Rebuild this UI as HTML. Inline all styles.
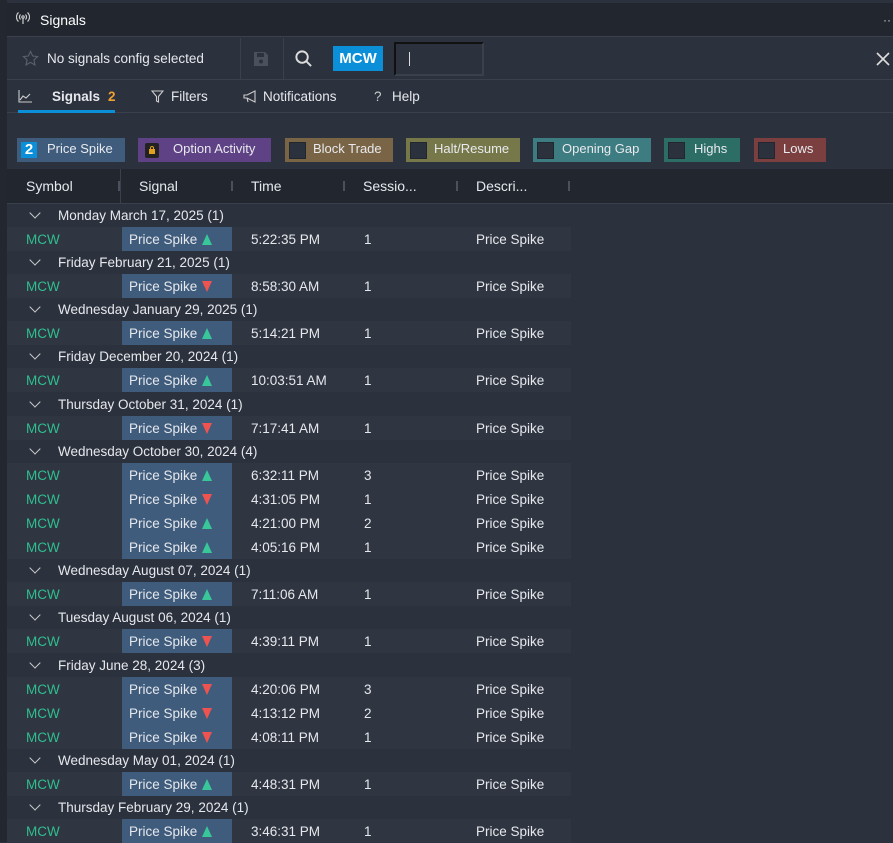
<!DOCTYPE html>
<html><head><meta charset="utf-8"><style>
*{box-sizing:border-box;margin:0;padding:0}
body{width:893px;height:842px;overflow:hidden;background:#2b313d;font-family:"Liberation Sans",sans-serif;font-size:13.5px;color:#e6e8ec;position:relative}
.strip{position:absolute;left:0;top:0;width:7px;height:842px;background:#23272f}
.top{position:absolute;left:7px;top:0;right:0;height:3px;background:#2b313d}
.title{position:absolute;left:7px;top:3px;right:0;height:34px;background:#21262f;border-bottom:1px solid #3a404c}
.title span{position:absolute;left:33px;top:9px;font-size:14px;color:#fff}
.tool{position:absolute;left:7px;top:38px;right:0;height:42px;background:#2b313d;border-bottom:1px solid #3a404c}
.tabs{position:absolute;left:7px;top:81px;right:0;height:32px;border-bottom:1px solid #3a404c}
.chip{position:absolute;top:138px;height:24px;color:#e8eaee;font-size:13px;line-height:22px}
.box{position:absolute;left:4px;top:4px;width:17px;height:17px;background:#2b313d;border:1px solid #22262e}
.hdr{position:absolute;left:7px;top:169px;right:0;height:35px;background:#21262f;border-bottom:1px solid #3a404c}
.hdr span{position:absolute;top:9px;font-size:14px}
.sep{position:absolute;top:12px;width:2px;height:10px;background:#4a505c}
.g{position:absolute;left:7px;height:23px;width:880px}
.g b{font-weight:normal;position:absolute;left:51px;top:4px}
.g i{position:absolute;left:24px;top:5px;width:8px;height:8px;border-right:1.6px solid #ccc;border-bottom:1.6px solid #ccc;transform:rotate(45deg)}
.r{position:absolute;left:7px;width:564px;height:24px;background:#2f3541}
.r span{position:absolute;top:5px}
.sym{left:19px;color:#2fbf8f}
.sig{position:absolute;left:115px;top:0;width:110px;height:24px;background:#3f5c7d;padding:5px 0 0 7px}
.ar{position:absolute;left:80px;top:7px;width:0;height:0;border-left:5px solid transparent;border-right:5px solid transparent}
.up{border-bottom:11px solid #39c79a}.dn{border-top:11px solid #ef5350}
</style></head><body>
<div class="strip"></div><div class="top"></div>
<div class="title">
<svg style="position:absolute;left:9px;top:8px" width="14" height="14" viewBox="0 0 14 14" fill="none" stroke="#ccc" stroke-width="1.2"><circle cx="7" cy="6" r="1.2"/><path d="M7 7v6M4.5 3.5a3.5 3.5 0 0 0 0 5M9.5 3.5a3.5 3.5 0 0 1 0 5M2.5 1.5a6 6 0 0 0 0 9M11.5 1.5a6 6 0 0 1 0 9"/></svg>
<span>Signals</span><div style="position:absolute;right:2px;top:10px;color:#ccc;font-size:12px">··</div></div>
<div class="tool">
<svg style="position:absolute;left:15px;top:12px" width="17" height="17" viewBox="0 0 24 24" fill="none" stroke="#5a606c" stroke-width="1.6"><path d="M12 2l3 6.5 7 .8-5.2 4.8 1.5 7L12 17.5 5.7 21l1.5-7L2 9.3l7-.8z"/></svg>
<div style="position:absolute;left:40px;top:13px">No signals config selected</div>
<div style="position:absolute;left:233px;top:0;width:1px;height:42px;background:#3a404c"></div>
<svg style="position:absolute;left:246px;top:13px" width="16" height="16" viewBox="0 0 16 16"><path d="M1 1h11l3 3v11H1z" fill="#4a505c"/><rect x="4" y="2" width="7" height="4" fill="#2b313d"/><circle cx="8" cy="10.5" r="2" fill="#2b313d"/></svg>
<div style="position:absolute;left:276px;top:0;width:1px;height:42px;background:#3a404c"></div>
<svg style="position:absolute;left:287px;top:11px" width="19" height="19" viewBox="0 0 20 20" fill="none" stroke="#ddd" stroke-width="2"><circle cx="8.5" cy="8.5" r="6"/><path d="M13 13l5 5"/></svg>
<div style="position:absolute;left:326px;top:8px;width:50px;height:25px;background:#0a8fd8;color:#fff;font-size:15px;font-weight:bold;text-align:center;line-height:25px">MCW</div>
<div style="position:absolute;left:387px;top:4px;width:90px;height:34px;border:2px solid #111;border-right-color:#3a404c;border-bottom-color:#3a404c;background:#2b313d"><div style="position:absolute;left:13px;top:8px;width:1px;height:14px;background:#ddd"></div></div>
<svg style="position:absolute;right:3px;top:14px" width="14" height="14" viewBox="0 0 14 14" stroke="#ddd" stroke-width="1.6"><path d="M1 1l12 12M13 1L1 13"/></svg>
</div>
<div class="tabs">
<svg style="position:absolute;left:11px;top:9px" width="14" height="13" viewBox="0 0 14 13" fill="none" stroke="#ccc" stroke-width="1.1"><path d="M1 0v12h13M2 10l3-4 3 2 4-4"/></svg>
<div style="position:absolute;left:45px;top:8px;font-weight:bold">Signals</div>
<div style="position:absolute;left:101px;top:8px;font-weight:bold;color:#f0a030">2</div>
<div style="position:absolute;left:11px;top:29px;width:97px;height:3px;background:#0a8fd8"></div>
<svg style="position:absolute;left:144px;top:9px" width="13" height="13" viewBox="0 0 13 13" fill="none" stroke="#ccc" stroke-width="1.1"><path d="M1 1h11L7.5 6.5V12L5.5 11V6.5z"/></svg>
<div style="position:absolute;left:164px;top:8px">Filters</div>
<svg style="position:absolute;left:236px;top:9px" width="14" height="13" viewBox="0 0 14 13" fill="none" stroke="#ccc" stroke-width="1.1"><path d="M1 5h3l8-4v11L4 8H1zM4 8l1 4"/></svg>
<div style="position:absolute;left:256px;top:8px">Notifications</div>
<div style="position:absolute;left:367px;top:8px;color:#ccc">?</div>
<div style="position:absolute;left:385px;top:8px">Help</div>
</div>
<div class="chip" style="left:17px;width:108px;background:#3f5c7d"><div style="position:absolute;left:4px;top:4px;width:16px;height:16px;background:#0a8fd8;color:#fff;font-weight:bold;font-size:15px;line-height:16px;text-align:center">2</div><span style="position:absolute;left:30px">Price Spike</span></div>
<div class="chip" style="left:138px;width:133px;background:#5f4285"><div style="position:absolute;left:7px;top:5px;width:14px;height:15px;background:#222;border-radius:2px"><div style="position:absolute;left:4px;top:6px;width:6px;height:5px;background:#e0a020"></div><div style="position:absolute;left:5px;top:3px;width:4px;height:4px;border:1px solid #e0a020;border-bottom:none;border-radius:2px 2px 0 0"></div></div><span style="position:absolute;left:35px">Option Activity</span></div>
<div class="chip" style="left:285px;width:108px;background:#7a6446"><div class="box"></div><span style="position:absolute;left:28px">Block Trade</span></div>
<div class="chip" style="left:406px;width:114px;background:#77784a"><div class="box"></div><span style="position:absolute;left:28px">Halt/Resume</span></div>
<div class="chip" style="left:533px;width:118px;background:#3d7c80"><div class="box"></div><span style="position:absolute;left:29px">Opening Gap</span></div>
<div class="chip" style="left:664px;width:76px;background:#2c6d65"><div class="box"></div><span style="position:absolute;left:30px">Highs</span></div>
<div class="chip" style="left:754px;width:72px;background:#7b3f3f"><div class="box"></div><span style="position:absolute;left:29px">Lows</span></div>
<div class="hdr">
<span style="left:19px">Symbol</span><div style="position:absolute;left:113px;top:0;width:1px;height:35px;background:#3a404c"></div><div class="sep" style="left:111px"></div>
<span style="left:132px">Signal</span><div class="sep" style="left:224px"></div>
<span style="left:244px">Time</span><div class="sep" style="left:336px"></div>
<span style="left:356px">Sessio...</span><div class="sep" style="left:449px"></div>
<span style="left:469px">Descri...</span><div class="sep" style="left:561px"></div>
</div>
<div id="list"></div>
<script>
var d=[["Monday March 17, 2025",[["5:22:35 PM",1,1]]],["Friday February 21, 2025",[["8:58:30 AM",1,0]]],["Wednesday January 29, 2025",[["5:14:21 PM",1,1]]],["Friday December 20, 2024",[["10:03:51 AM",1,1]]],["Thursday October 31, 2024",[["7:17:41 AM",1,0]]],["Wednesday October 30, 2024",[["6:32:11 PM",3,1],["4:31:05 PM",1,0],["4:21:00 PM",2,1],["4:05:16 PM",1,1]]],["Wednesday August 07, 2024",[["7:11:06 AM",1,1]]],["Tuesday August 06, 2024",[["4:39:11 PM",1,0]]],["Friday June 28, 2024",[["4:20:06 PM",3,0],["4:13:12 PM",2,0],["4:08:11 PM",1,0]]],["Wednesday May 01, 2024",[["4:48:31 PM",1,1]]],["Thursday February 29, 2024",[["3:46:31 PM",1,1]]]];
var y=204,h="";
d.forEach(function(g){h+='<div class="g" style="top:'+Math.round(y)+'px"><i></i><b>'+g[0]+' ('+g[1].length+')</b></div>';y+=23;
g[1].forEach(function(r){h+='<div class="r" style="top:'+Math.round(y)+'px"><span class="sym">MCW</span><div class="sig">Price Spike <div class="ar '+(r[2]?'up':'dn')+'"></div></div><span style="left:244px">'+r[0]+'</span><span style="left:357px">'+r[1]+'</span><span style="left:469px">Price Spike</span></div>';y+=24.15;});});
document.getElementById('list').innerHTML=h;
</script>
</body></html>
